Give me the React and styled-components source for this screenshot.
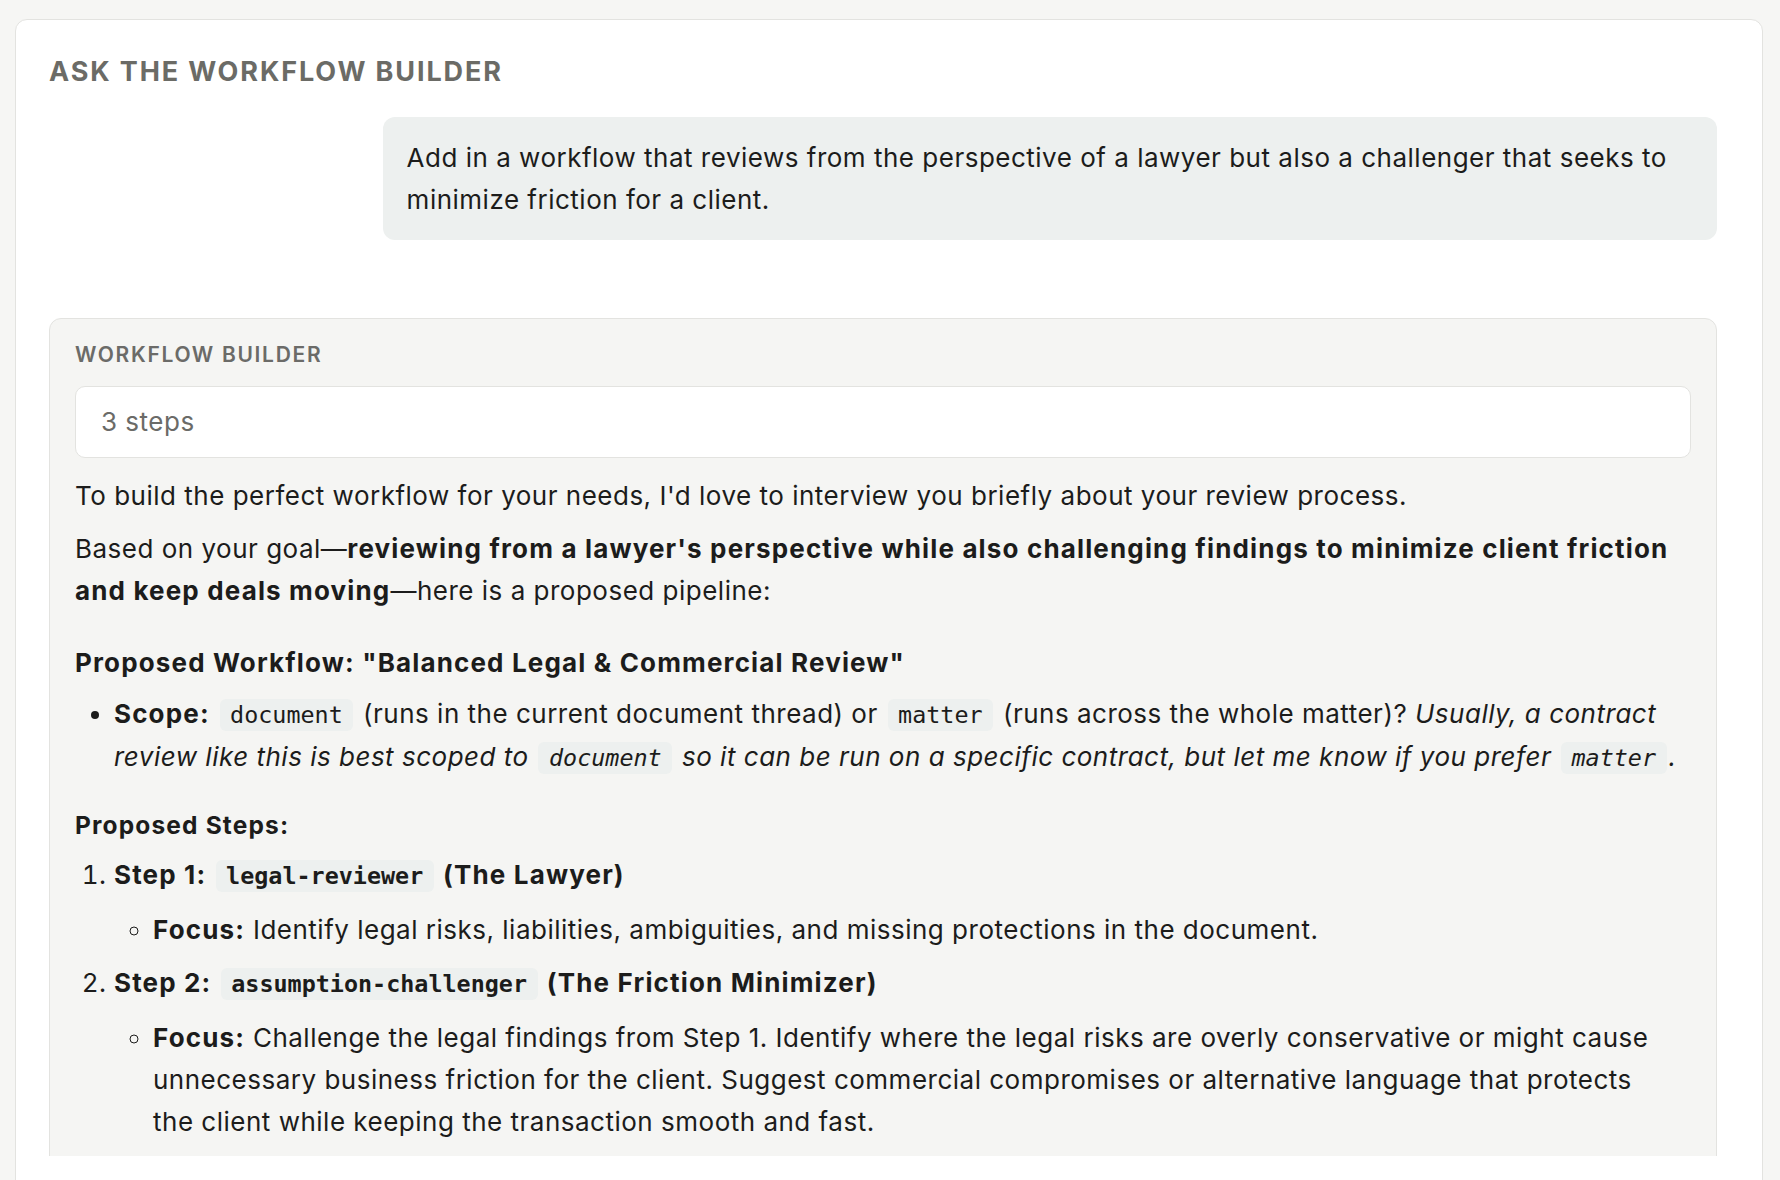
import styled, { createGlobalStyle } from "styled-components";

const GlobalStyle = createGlobalStyle`
  html, body {
    margin: 0;
    padding: 0;
    background: #f6f6f4;
    overflow: hidden;
  }
  body {
    font-family: Inter, "Noto Sans", "Liberation Sans", sans-serif;
    color: #1c1c1b;
    -webkit-font-smoothing: antialiased;
  }
`;

const Page = styled.div`
  height: 100vh;
  padding: 19px 17px 0 15px;
  box-sizing: border-box;
`;

const Panel = styled.section`
  height: calc(100vh + 20px);
  display: flex;
  flex-direction: column;
  background: #ffffff;
  border: 1px solid #e3e3e0;
  border-radius: 12px;
  padding: 36px 45px 0 33px;
  box-sizing: border-box;
`;

const PanelTitle = styled.h2`
  margin: 0 0 29px;
  font-size: 27px;
  line-height: 32px;
  font-weight: 700;
  letter-spacing: 0.07em;
  text-transform: uppercase;
  color: #6b6b66;
`;

const Thread = styled.div`
  height: 1039px;
  overflow: hidden;
  display: flex;
  flex-direction: column;
  gap: 78px;
`;

const UserBubble = styled.div`
  align-self: flex-end;
  max-width: 80%;
  box-sizing: border-box;
  padding: 20px 24px 19px;
  background: #edf0ef;
  border-radius: 12px;
  font-size: 26px;
  line-height: 42px;
  letter-spacing: 0.5px;
`;

const BuilderCard = styled.div`
  flex-shrink: 0;
  background: #f5f5f3;
  border: 1px solid #e3e3e0;
  border-radius: 12px;
  padding: 24px 25px;
`;

const CardLabel = styled.div`
  font-size: 21px;
  line-height: 24px;
  font-weight: 600;
  letter-spacing: 0.08em;
  text-transform: uppercase;
  color: #6b6b68;
  margin-bottom: 19px;
`;

const StepCount = styled.div`
  background: #ffffff;
  border: 1px solid #e3e3e0;
  border-radius: 10px;
  padding: 14px 25px;
  font-size: 26px;
  line-height: 42px;
  letter-spacing: 0.5px;
  color: #6b6b68;
  margin-bottom: 17px;
`;

const Reply = styled.div`
  padding-right: 12px;
  font-size: 26px;
  line-height: 42px;
  letter-spacing: 0.5px;

  p {
    margin: 0 0 11px;
  }
  strong {
    font-weight: 700;
    letter-spacing: 1.15px;
  }
`;

const Heading = styled.h3`
  margin: ${(p) => p.$top || 33}px 0 ${(p) => p.$bottom || 12}px;
  font-size: ${(p) => p.$size || 26}px;
  line-height: 36px;
  font-weight: 700;
  letter-spacing: 1.15px;
`;

const List = styled.ul`
  margin: 0;
  padding-left: 1.5em;
  list-style: ${(p) => p.$marker || "disc"};

  & > li + li {
    margin-top: 11px;
  }
  & > li > ul {
    margin-top: 12px;
  }
`;

const Code = styled.code`
  font-family: "DejaVu Sans Mono", "Liberation Mono", monospace;
  font-size: 0.9em;
  letter-spacing: 0;
  background: #edf0ef;
  border-radius: 6px;
  padding: 0.1em 0.45em;
  margin: 0 2px;
`;

export default function App() {
  return (
    <>
      <GlobalStyle />
      <Page>
        <Panel>
          <PanelTitle>Ask the workflow builder</PanelTitle>
          <Thread>
            <UserBubble>
              Add in a workflow that reviews from the perspective of a lawyer but also a challenger that seeks to
              minimize friction for a client.
            </UserBubble>

            <BuilderCard>
              <CardLabel>Workflow builder</CardLabel>
              <StepCount>3 steps</StepCount>
              <Reply>
                <p>To build the perfect workflow for your needs, I'd love to interview you briefly about your review process.</p>
                <p>
                  Based on your goal—<strong>reviewing from a lawyer's perspective while also challenging findings to minimize client friction and keep deals moving</strong>—here is a proposed pipeline:
                </p>

                <Heading>Proposed Workflow: "Balanced Legal &amp; Commercial Review"</Heading>
                <List>
                  <li>
                    <strong>Scope:</strong> <Code>document</Code> (runs in the current document thread) or <Code>matter</Code> (runs across the whole matter)?{" "}
                    <em>
                      Usually, a contract review like this is best scoped to <Code>document</Code> so it can be run on a specific contract, but let me know if you prefer <Code>matter</Code>.
                    </em>
                  </li>
                </List>

                <Heading $top={28} $bottom={11} $size={24.5}>Proposed Steps:</Heading>
                <List as="ol" $marker="decimal">
                  <li>
                    <strong>Step 1: <Code>legal-reviewer</Code> (The Lawyer)</strong>
                    <List $marker="circle">
                      <li>
                        <strong>Focus:</strong> Identify legal risks, liabilities, ambiguities, and missing protections in the document.
                      </li>
                    </List>
                  </li>
                  <li>
                    <strong>Step 2: <Code>assumption-challenger</Code> (The Friction Minimizer)</strong>
                    <List $marker="circle">
                      <li>
                        <strong>Focus:</strong> Challenge the legal findings from Step 1. Identify where the legal risks are overly conservative or might cause unnecessary business friction for the client. Suggest commercial compromises or alternative language that protects the client while keeping the transaction smooth and fast.
                      </li>
                    </List>
                  </li>
                </List>
              </Reply>
            </BuilderCard>
          </Thread>
        </Panel>
      </Page>
    </>
  );
}
